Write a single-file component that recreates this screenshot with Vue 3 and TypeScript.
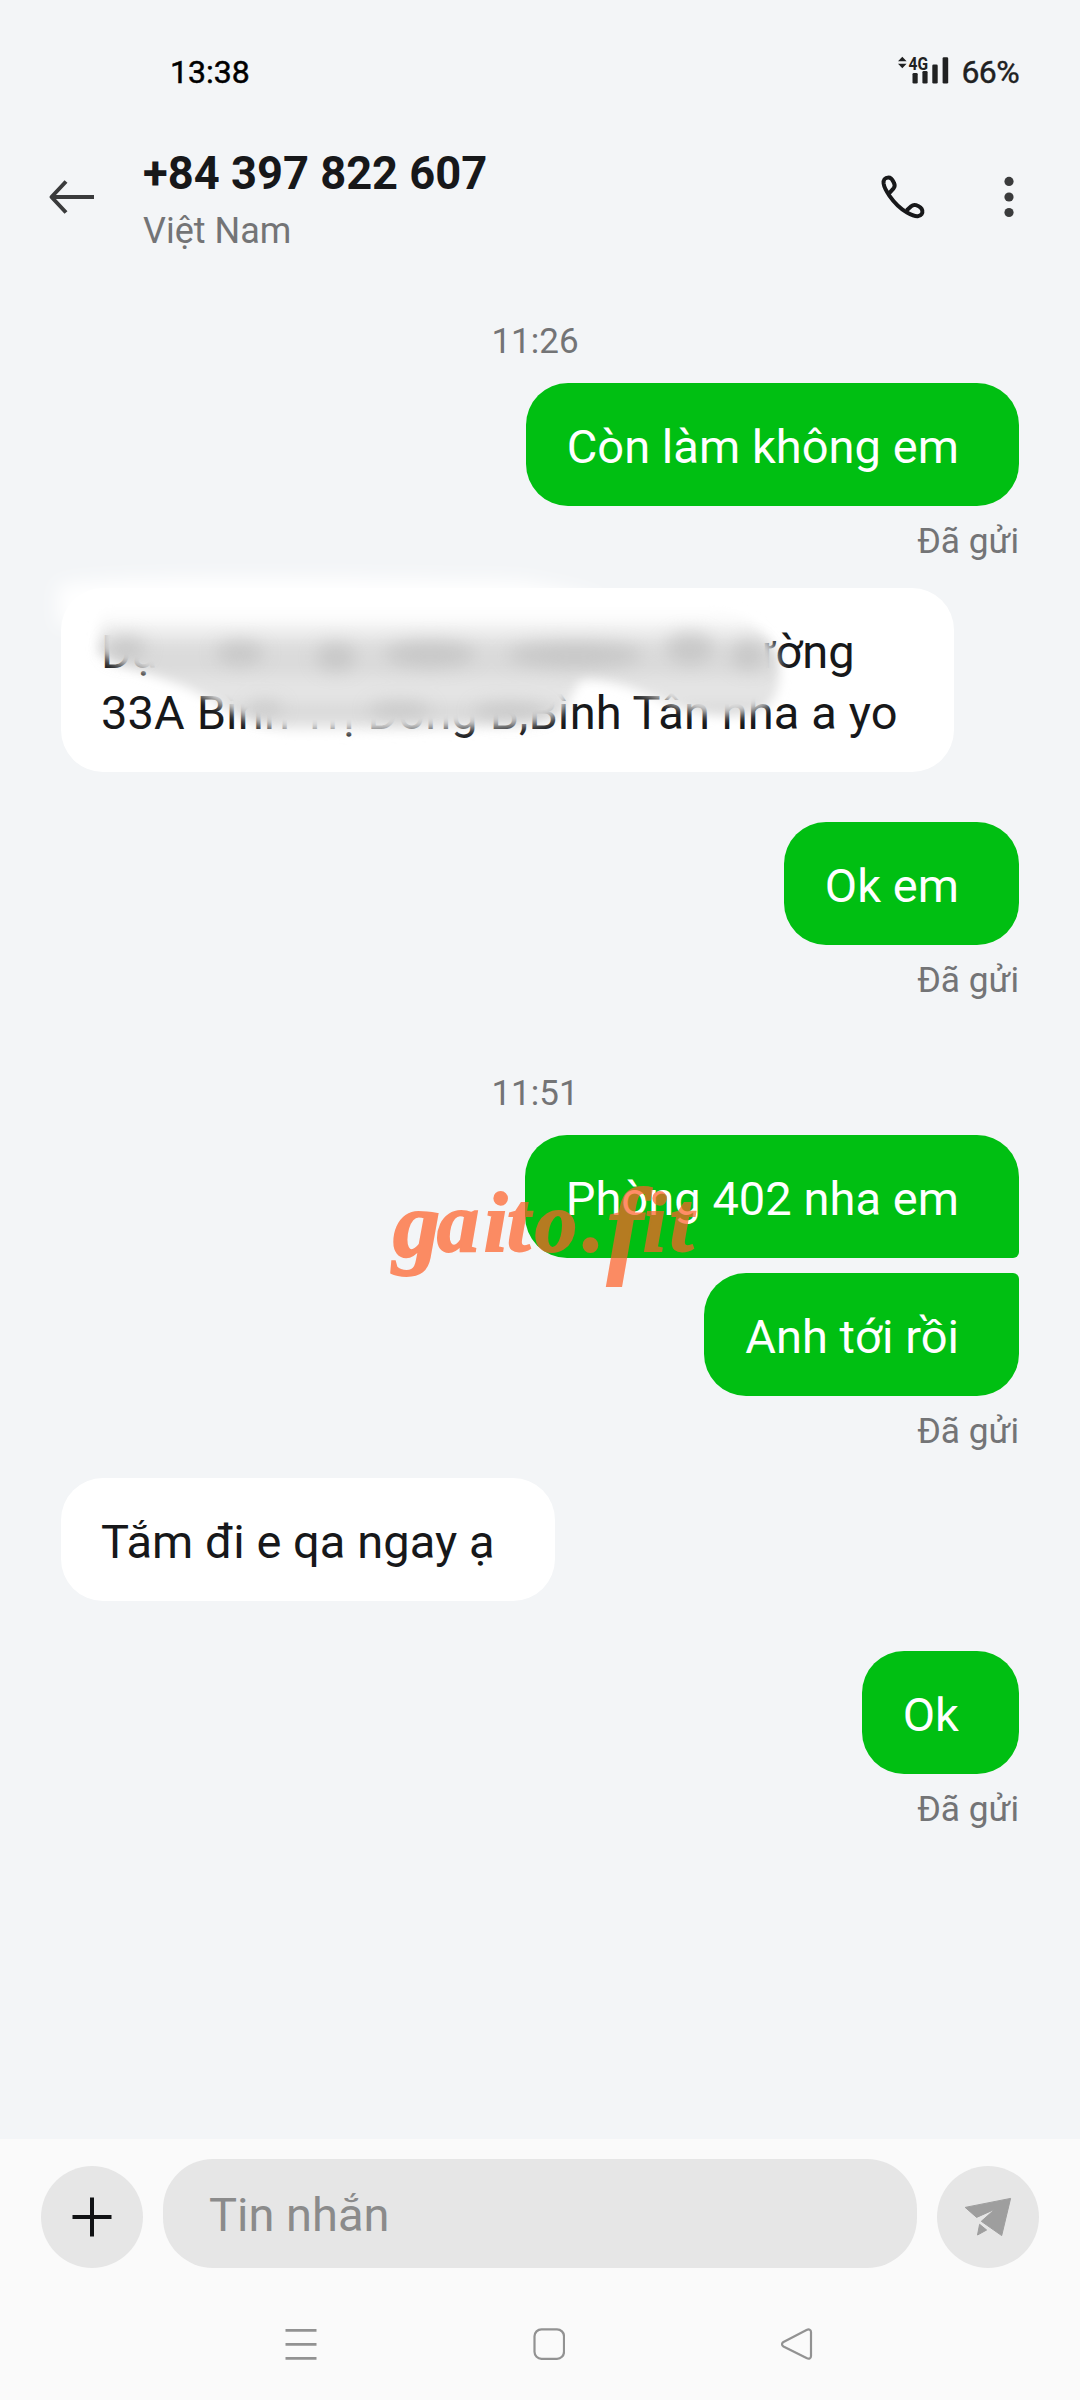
<script setup lang="ts">
interface Entry {
  kind: 'time' | 'out' | 'in' | 'status'
  text: string
  shape?: string
}

const before: Entry[] = [
  { kind: 'time', text: '11:26' },
  { kind: 'out', text: 'Còn làm không em' },
  { kind: 'status', text: 'Đã gửi' },
]

const after: Entry[] = [
  { kind: 'out', text: 'Ok em', shape: 'spaced' },
  { kind: 'status', text: 'Đã gửi' },
  { kind: 'time', text: '11:51', shape: 'later' },
  { kind: 'out', text: 'Phòng 402 nha em', shape: 'first' },
  { kind: 'out', text: 'Anh tới rồi', shape: 'last' },
  { kind: 'status', text: 'Đã gửi' },
  { kind: 'in', text: 'Tắm đi e qa ngay ạ' },
  { kind: 'out', text: 'Ok', shape: 'spaced' },
  { kind: 'status', text: 'Đã gửi' },
]
</script>

<template>
  <div class="screen">
    <div class="statusbar">
      <span class="clock">13:38</span>
      <span class="indicators">
        <svg class="signal" width="54" height="42" viewBox="0 -10 54 42">
          <path d="M1 6.2 5.3 1.800 9.600 6.200ZM1 8.800H9.600L5.300 13.200Z" />
          <text x="11.500" y="14.500" class="net" textLength="19.500" lengthAdjust="spacingAndGlyphs">4G</text>
          <rect x="15.500" y="18" width="5.200" height="10.500" rx="1.300" />
          <rect x="25.400" y="16" width="5.200" height="12.500" rx="1.300" />
          <rect x="35.300" y="9.500" width="5.400" height="19" rx="1.300" />
          <rect x="45.600" y="2.300" width="5.600" height="26.200" rx="1.300" />
        </svg>
        <span class="battery">66%</span>
      </span>
    </div>

    <header class="header">
      <svg class="back" width="48" height="40" viewBox="0 0 48 40">
        <path d="M18 4.500 3.500 20 18 35.500M3.500 20H46" fill="none" stroke="#3a3b3c" stroke-width="4" stroke-linejoin="round" />
      </svg>
      <div class="contact">
        <div class="number">+84 397 822 607</div>
        <div class="country">Việt Nam</div>
      </div>
      <svg class="phone" width="46" height="46" viewBox="0 0 46 46">
        <path
          d="M9.500 18.800 13.600 14.300C15 12.600 14.900 10.800 14 9 12.600 6 12 3.400 8.500 3.400 4.800 3.400 3.200 6 3.600 9.500 4.200 13.500 6.500 17.500 9.500 21.800 13.500 27.500 20 34.500 27 38.500 31 40.800 35 42.400 37.800 42.200 41.500 41.900 42.800 39 42.300 36.500 41.600 33.600 38.500 32 36 31.200 34 30.600 32.600 31 31.200 32.200L26.800 36.200"
          fill="none" stroke="#17181a" stroke-width="4" stroke-linejoin="round"
        />
      </svg>
      <svg class="more" width="12" height="44" viewBox="0 0 12 44">
        <circle cx="6" cy="6.400" r="4.600" /><circle cx="6" cy="22" r="4.600" /><circle cx="6" cy="37.500" r="4.600" />
      </svg>
    </header>

    <main class="thread">
      <div v-for="(e, i) in before" :key="'b' + i" :class="['entry', e.kind, e.shape]">{{ e.text }}</div>

      <div class="entry in long">
        <div class="line first-line"><span>Dạ</span><span>đường</span></div>
        <div class="line second-line">33A Bình Trị Đông B,Bình Tân nha a yo</div>
        <svg class="smudge" width="800" height="220" viewBox="40 560 800 220">
          <defs>
            <filter id="soft" x="-20%" y="-40%" width="140%" height="180%"><feGaussianBlur stdDeviation="5.500" /></filter>
            <filter id="wide" x="-30%" y="-60%" width="160%" height="220%"><feGaussianBlur stdDeviation="9" /></filter>
            <linearGradient id="bands" gradientUnits="userSpaceOnUse" x1="0" y1="605" x2="0" y2="735">
              <stop offset="0" stop-color="#fff" />
              <stop offset=".1" stop-color="#fcfcfc" />
              <stop offset=".2" stop-color="#efefef" />
              <stop offset=".31" stop-color="#dedede" />
              <stop offset=".44" stop-color="#d9d9d9" />
              <stop offset=".6" stop-color="#e3e3e3" />
              <stop offset=".7" stop-color="#e5e5e5" />
              <stop offset=".82" stop-color="#d9d9d9" />
              <stop offset=".9" stop-color="#e0e0e0" />
              <stop offset="1" stop-color="#fff" />
            </linearGradient>
          </defs>
          <path d="M58 586C100 575 300 577 520 581 550 586 580 592 600 600V625H58Z" fill="#fff" filter="url(#wide)" />
          <path
            d="M102 605H720C750 618 772 638 777 655 781 675 780 696 767 706 745 718 715 718 690 710 655 700 620 678 583 679 570 690 572 708 553 718 540 729 340 732 290 732 245 727 220 700 175 683 140 670 112 664 98 652Z"
            fill="url(#bands)" filter="url(#soft)"
          />
          <g filter="url(#wide)" fill="#b4b4b4" opacity=".5">
            <ellipse cx="126" cy="648" rx="20" ry="12" />
            <ellipse cx="240" cy="653" rx="24" ry="12" />
            <ellipse cx="336" cy="657" rx="20" ry="14" />
            <ellipse cx="430" cy="654" rx="46" ry="13" />
            <ellipse cx="575" cy="655" rx="68" ry="13" />
            <ellipse cx="690" cy="648" rx="24" ry="16" />
            <ellipse cx="748" cy="655" rx="17" ry="15" />
            <ellipse cx="265" cy="708" rx="18" ry="7" />
            <ellipse cx="400" cy="710" rx="32" ry="8" />
            <ellipse cx="510" cy="711" rx="38" ry="8" />
          </g>
        </svg>
      </div>

      <div v-for="(e, i) in after" :key="'a' + i" :class="['entry', e.kind, e.shape]">{{ e.text }}</div>

      <svg class="watermark" width="330" height="160" viewBox="385 1160 330 160">
        <text y="1251"><tspan x="393" dy="5" font-size="94">g</tspan><tspan x="437 484 507 535 583" dy="-5">aito.</tspan><tspan x="607" dy="12" font-size="108">f</tspan><tspan x="643 670" dy="-12">it</tspan></text>
      </svg>
    </main>

    <footer class="footer">
      <div class="composer">
        <div class="round">
          <svg width="40" height="40" viewBox="0 0 40 40"><path d="M20 .500V39.500M.500 20H39.500" stroke="#111214" stroke-width="4" /></svg>
        </div>
        <div class="input">Tin nhắn</div>
        <div class="round">
          <svg width="50" height="42" viewBox="963 2197 50 42">
            <path
              d="M965.200 2208.400 1010.600 2199.400 1001.700 2236.600 981.300 2222.300 995 2210.200 976.600 2218.400ZM979.600 2225.300 986.600 2231 977.500 2236Z"
              fill="#9e9e9e" stroke="#9e9e9e" stroke-width="1" stroke-linejoin="round"
            />
          </svg>
        </div>
      </div>
      <nav class="nav">
        <svg width="32" height="32" viewBox="0 0 32 32"><path d="M.500 2.300H31.500M.500 16.300H31.500M.500 30.300H31.500" stroke="#929292" stroke-width="2.800" /></svg>
        <svg width="32" height="32" viewBox="0 0 32 32"><rect x="1.500" y="1.300" width="29.500" height="29.500" rx="7" fill="none" stroke="#929292" stroke-width="2.200" /></svg>
        <svg width="32" height="32" viewBox="0 0 32 32"><path d="M2.500 14 25.500 2C28 .900 30 1.500 30 4V28C30 30.500 28 31.300 25.500 30L2.500 18.500C.500 17.300 .500 15.200 2.500 14Z" fill="none" stroke="#929292" stroke-width="2.200" /></svg>
      </nav>
    </footer>
  </div>
</template>

<style>
body {
  margin: 0;
}
</style>

<style scoped>
.screen {
  display: flex;
  flex-direction: column;
  width: 1080px;
  height: 2400px;
  overflow: hidden;
  background: #f3f5f7;
  font-family: Roboto, "Liberation Sans", sans-serif;
  color: #17181a;
}
svg {
  display: block;
  flex: none;
}
.statusbar {
  box-sizing: border-box;
  height: 120px;
  padding: 54px 61px 0 170px;
  display: flex;
  justify-content: space-between;
  line-height: 37px;
  font-size: 32px;
}
.clock {
  color: #000;
  -webkit-text-stroke: 0.5px #000;
}
.indicators {
  display: flex;
}
.signal {
  margin-top: -9px;
  margin-right: 10px;
  fill: #202122;
}
.net {
  font-size: 19px;
  font-weight: 700;
}
.battery {
  color: #202122;
  letter-spacing: -0.6px;
  -webkit-text-stroke: 0.4px #202122;
}
.header {
  box-sizing: border-box;
  height: 150px;
  padding: 0 65px 0 48px;
  display: flex;
  align-items: flex-start;
}
.back {
  margin-top: 57px;
}
.contact {
  flex: 1;
  margin-left: 47px;
  padding-top: 27px;
}
.number {
  font-size: 45.3px;
  line-height: 54px;
  font-weight: 700;
}
.country {
  margin-top: 9px;
  font-size: 36px;
  line-height: 42px;
  color: #737476;
}
.phone {
  margin-top: 54px;
}
.more {
  margin: 55px 0 0 77px;
  fill: #3a3b3c;
}
.thread {
  position: relative;
  flex: 1;
  display: flex;
  flex-direction: column;
  padding: 51px 61px 0;
}
.entry {
  font-size: 47px;
  line-height: 61px;
  white-space: nowrap;
}
.entry.time {
  align-self: center;
  margin-right: 10px;
  margin-bottom: 20px;
  font-size: 35px;
  line-height: 42px;
  color: #737476;
}
.entry.status {
  align-self: flex-end;
  margin-top: 14px;
  font-size: 35.3px;
  line-height: 42px;
  color: #737476;
}
.entry.later {
  margin-top: 72px;
}
.out {
  align-self: flex-end;
  padding: 33px 60px 29px 41px;
  border-radius: 42px;
  background: #00bf12;
  color: #fff;
  letter-spacing: 0.05px;
}
.in {
  align-self: flex-start;
  margin-top: 26px;
  padding: 33px 60px 29px 40px;
  border-radius: 42px;
  background: #fff;
  letter-spacing: 0.05px;
}
.spaced {
  margin-top: 50px;
}
.first {
  border-bottom-right-radius: 6px;
}
.last {
  margin-top: 15px;
  border-top-right-radius: 6px;
}
.long {
  position: relative;
  padding-right: 56px;
}
.first-line {
  display: flex;
  justify-content: space-between;
  padding-right: 43px;
}
.second-line {
  letter-spacing: 0.13px;
}
.smudge {
  position: absolute;
  left: -21px;
  top: -28px;
}
.watermark {
  position: absolute;
  left: 385px;
  top: 890px;
  opacity: 0.71;
  fill: #ff6028;
  stroke: #ff6028;
  stroke-width: 2px;
  font: italic bold 84px "Liberation Serif", serif;
}
.footer {
  height: 261px;
  background: #fafafa;
}
.composer {
  display: flex;
  align-items: flex-end;
  gap: 20px;
  padding: 20px 41px 0;
}
.round {
  display: flex;
  align-items: center;
  justify-content: center;
  width: 102px;
  height: 102px;
  border-radius: 50%;
  background: #e6e6e6;
}
.input {
  flex: 1;
  box-sizing: border-box;
  height: 109px;
  padding: 25px 46px 0;
  border-radius: 50px;
  background: #e6e6e6;
  color: #8b8b8b;
  font-size: 47px;
  line-height: 61px;
}
.nav {
  display: flex;
  justify-content: space-between;
  padding: 60px 267px 0 285px;
}
</style>
